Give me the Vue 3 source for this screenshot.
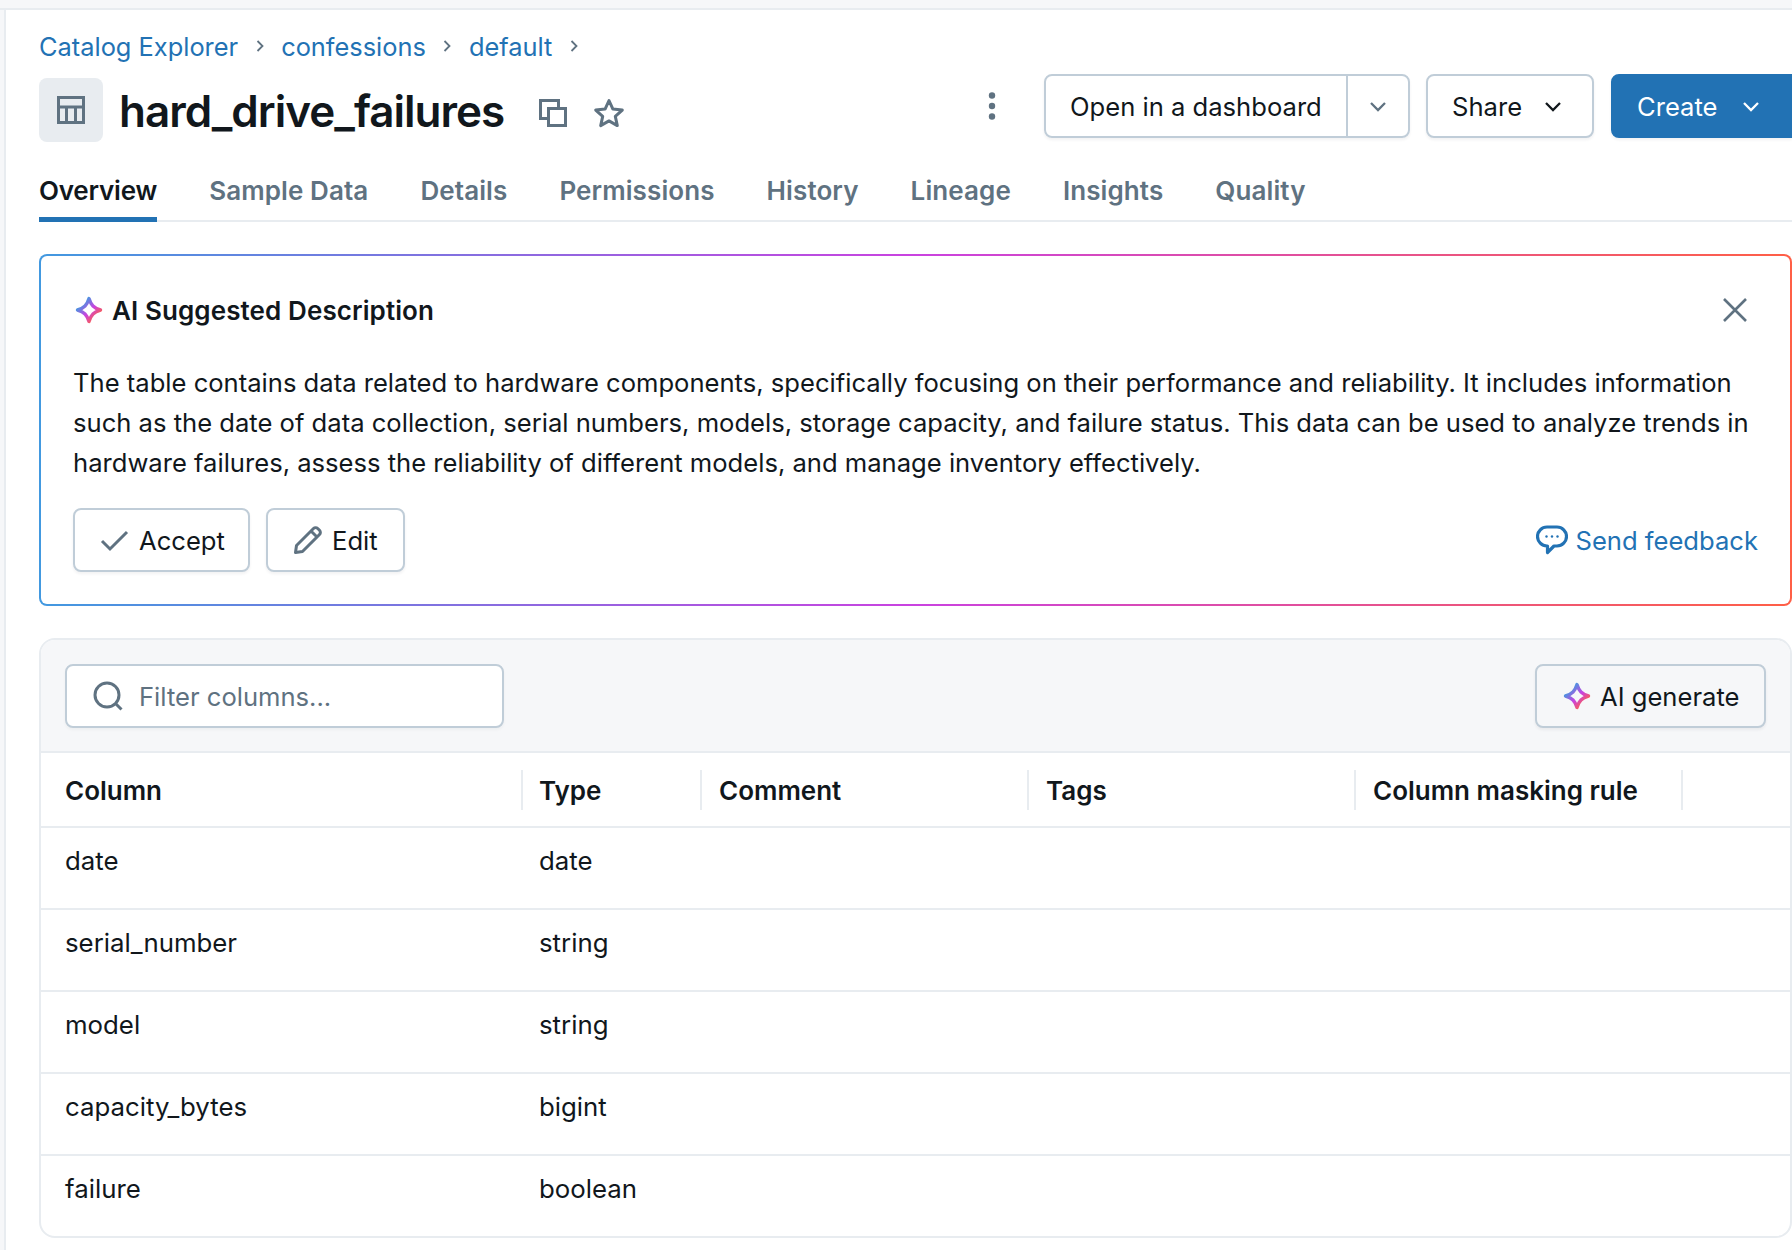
<script setup>
const tabs = ['Overview', 'Sample Data', 'Details', 'Permissions', 'History', 'Lineage', 'Insights', 'Quality']
const headers = ['Column', 'Type', 'Comment', 'Tags', 'Column masking rule', '']
const rows = [
  ['date', 'date'],
  ['serial_number', 'string'],
  ['model', 'string'],
  ['capacity_bytes', 'bigint'],
  ['failure', 'boolean'],
]
</script>

<template>
  <div class="topbar"></div>
  <div class="shell">
    <div class="gutter"></div>
    <main class="main">
      <nav class="crumbs">
        <a>Catalog Explorer</a>
        <svg class="sep" viewBox="0 0 12 14"><path d="M3.500 2l5 5-5 5" /></svg>
        <a>confessions</a>
        <svg class="sep" viewBox="0 0 12 14"><path d="M3.500 2l5 5-5 5" /></svg>
        <a>default</a>
        <svg class="sep" viewBox="0 0 12 14"><path d="M3.500 2l5 5-5 5" /></svg>
      </nav>

      <header class="head">
        <div class="title-group">
          <div class="tile">
            <svg class="i-table" viewBox="0 0 28 28"><path d="M1.500 1.500h25v25h-25zM1.500 11h25M9.500 11v15.500M18.500 11v15.500" /></svg>
          </div>
          <h1>hard_drive_failures</h1>
          <svg class="i-copy" viewBox="0 0 28 28"><path d="M19.500 8V1.500H1.500v18H8M9.500 9.500h17v17h-17z" /></svg>
          <svg class="i-star" viewBox="0 0 32 30"><path d="M16 2.500l3.900 8.600 9.400 1-7 6.300 2 9.200-8.300-4.700-8.300 4.700 2-9.200-7-6.300 9.400-1z" /></svg>
        </div>
        <div class="spacer"></div>
        <svg class="i-kebab" viewBox="0 0 8 28"><circle cx="4" cy="3.500" r="3.200" /><circle cx="4" cy="14" r="3.200" /><circle cx="4" cy="24.500" r="3.200" /></svg>
        <div class="split">
          <span class="split-main">Open in a dashboard</span>
          <span class="split-caret"><svg class="chev muted" viewBox="0 0 20 20"><path d="M3 7l7 7 7-7" /></svg></span>
        </div>
        <button class="btn share">Share <svg class="chev dark" viewBox="0 0 20 20"><path d="M3 7l7 7 7-7" /></svg></button>
        <button class="btn create">Create <svg class="chev light" viewBox="0 0 20 20"><path d="M3 7l7 7 7-7" /></svg></button>
      </header>

      <div class="tabs">
        <span v-for="(t, i) in tabs" :key="t" class="tab" :class="{ on: i === 0 }">{{ t }}</span>
      </div>

      <section class="card">
        <div class="card-head">
          <svg class="spark" viewBox="0 0 28 28">
            <defs>
              <linearGradient id="spA" x1="0" y1=".2" x2=".8" y2="1">
                <stop offset=".1" stop-color="#4299e0" /><stop offset=".55" stop-color="#ca42e0" /><stop offset=".95" stop-color="#ff5f46" />
              </linearGradient>
            </defs>
            <path stroke="url(#spA)" d="M14 2.500c2 6.500 4.800 9.500 11.500 11.500-6.700 2-9.500 5-11.500 11.500-2-6.500-4.800-9.500-11.500-11.500 6.700-2 9.500-5 11.500-11.500z" />
          </svg>
          <strong>AI Suggested Description</strong>
          <svg class="i-close" viewBox="0 0 26 26"><path d="M2 2l22 22M24 2L2 24" /></svg>
        </div>
        <p>The table contains data related to hardware components, specifically focusing on their performance and reliability. It includes information such as the date of data collection, serial numbers, models, storage capacity, and failure status. This data can be used to analyze trends in hardware failures, assess the reliability of different models, and manage inventory effectively.</p>
        <div class="card-actions">
          <button class="btn accept">
            <svg class="i-check" viewBox="0 0 30 24"><path d="M3 13l8 8L28 4" /></svg>Accept
          </button>
          <button class="btn edit">
            <svg class="i-pencil" viewBox="0 0 30 30"><path d="M2.500 27.500l1-7L20.500 3.500a3 3 0 0 1 4.200 0l1.800 1.800a3 3 0 0 1 0 4.200L9.500 26.500zM18 6l6 6" /></svg>Edit
          </button>
          <a class="feedback">
            <svg class="i-chat" viewBox="0 0 32 30"><path d="M11 2h10a9.500 9.500 0 0 1 0 19h-3l-6.500 6.500V21H11a9.500 9.500 0 0 1 0-19z" /><circle class="dot" cx="10.500" cy="11.500" r="1.200" /><circle class="dot" cx="16" cy="11.500" r="1.200" /><circle class="dot" cx="21.500" cy="11.500" r="1.200" /></svg>
            Send feedback
          </a>
        </div>
      </section>

      <section class="panel">
        <div class="toolbar">
          <div class="filter">
            <svg class="i-search" viewBox="0 0 30 30"><circle cx="14" cy="14" r="12" /><path d="M22.500 22.500l6 6" /></svg>
            <span>Filter columns...</span>
          </div>
          <button class="btn ai">
            <svg class="spark" viewBox="0 0 28 28">
              <defs>
                <linearGradient id="spB" x1="0" y1=".2" x2=".8" y2="1">
                  <stop offset=".1" stop-color="#4299e0" /><stop offset=".55" stop-color="#ca42e0" /><stop offset=".95" stop-color="#ff5f46" />
                </linearGradient>
              </defs>
              <path stroke="url(#spB)" d="M14 2.500c2 6.500 4.800 9.500 11.500 11.500-6.700 2-9.500 5-11.500 11.500-2-6.500-4.800-9.500-11.500-11.500 6.700-2 9.500-5 11.500-11.500z" />
            </svg>
            <span class="ai-label">AI generate</span>
          </button>
        </div>
        <div class="row hrow">
          <div v-for="(h, i) in headers" :key="i" class="cell hcell">{{ h }}</div>
        </div>
        <div v-for="r in rows" :key="r[0]" class="row drow">
          <div class="cell">{{ r[0] }}</div>
          <div class="cell">{{ r[1] }}</div>
        </div>
      </section>
    </main>
  </div>
</template>

<style>
html, body { margin: 0; background: #fff; }
</style>

<style scoped>
* { box-sizing: border-box; }
.topbar { height: 10px; background: #f6f7f9; border-bottom: 2px solid #e8ecf0; }
.shell { display: flex; width: 1792px; height: 1240px; overflow: hidden; font-family: Inter, "Liberation Sans", sans-serif; color: #11171c; font-size: 25.6px; }
.gutter { width: 6px; flex: none; background: #f6f7f9; border-right: 2px solid #e8ecf0; }
.main { width: 1786px; flex: none; padding-left: 33px; }

.crumbs { display: flex; align-items: center; height: 40px; margin-top: 16px; color: #2272b4; font-size: 25.4px; }
.sep { width: 12px; height: 14px; margin: 0 15.5px; fill: none; stroke: #5f7281; stroke-width: 1.8; }

.head { display: flex; align-items: flex-start; height: 68px; margin-top: 8px; }
.title-group { display: flex; align-items: center; height: 64px; margin-top: 4px; }
.tile { width: 64px; height: 64px; border-radius: 8px; background: #e8ecf0; display: flex; align-items: center; justify-content: center; flex: none; }
.i-table { width: 28px; height: 28px; fill: none; stroke: #5f7281; stroke-width: 3; }
h1 { margin: 0 0 0 16px; font-size: 44px; font-weight: 600; line-height: 66px; height: 64px; letter-spacing: -1px; }
.i-copy { width: 28px; height: 28px; margin-left: 35px; margin-top: 6px; fill: none; stroke: #5f7281; stroke-width: 3; }
.i-star { width: 32px; height: 30px; margin-left: 26px; margin-top: 6px; fill: none; stroke: #5f7281; stroke-width: 3; stroke-linejoin: round; }
.spacer { flex: 1; }
.i-kebab { width: 8px; height: 28px; fill: #5f7281; margin-right: 48px; margin-top: 18px; }

.btn { display: inline-flex; align-items: center; height: 64px; border: 2px solid #c0cdd8; border-radius: 8px; background: #fff; color: #11171c; font: inherit; padding: 0; box-shadow: 0 2px 3px rgba(31, 39, 45, .06); }
.split { display: flex; height: 64px; width: 366px; border: 2px solid #c0cdd8; border-radius: 8px; box-shadow: 0 2px 3px rgba(31, 39, 45, .06); }
.split-main { width: 302px; padding-left: 24px; line-height: 62px; border-right: 2px solid #c0cdd8; }
.split-caret { flex: 1; display: flex; align-items: center; justify-content: center; }
.chev { width: 20px; height: 20px; fill: none; stroke-width: 2.300; }
.chev.muted { stroke: #5f7281; }
.chev.dark { stroke: #11171c; margin-left: 21px; }
.chev.light { stroke: #fff; margin-left: 23px; }
.share { width: 168px; margin-left: 16px; padding-left: 24px; }
.create { width: 181px; margin-left: 17px; padding-left: 24px; background: #2272b4; border-color: #2272b4; color: #fff; border-radius: 8px 0 0 8px; }

.tabs { display: flex; gap: 52px; height: 80px; padding-top: 29px; border-bottom: 2px solid #e8ecf0; font-size: 26px; }
.tab { font-weight: 600; color: #5f7281; line-height: 40px; height: 51px; letter-spacing: .1px; }
.tab.on { color: #11171c; border-bottom: 5px solid #2272b4; letter-spacing: -.2px; }

.card { margin-top: 32px; height: 352px; padding: 0 32px; border: 2px solid transparent; border-radius: 8px; background: linear-gradient(#fff, #fff) padding-box, linear-gradient(90deg, #4299e0, #ca42e0 50%, #ff5f46) border-box; }
.card-head { display: flex; align-items: center; height: 40px; margin-top: 34px; }
.card-head strong { font-weight: 600; font-size: 26px; margin-left: 9px; letter-spacing: .1px; }
.card-head .spark { margin-left: 2px; }
.spark { width: 28px; height: 28px; fill: none; stroke-width: 3.400; stroke-linejoin: round; flex: none; }
.i-close { width: 26px; height: 26px; margin-left: auto; margin-right: 10px; fill: none; stroke: #5f7281; stroke-width: 2.600; }
.card p { margin: 33px 0 0; line-height: 40px; }
.card-actions { display: flex; align-items: center; margin-top: 25px; }
.accept { width: 177px; padding-left: 24px; }
.edit { width: 139px; margin-left: 16px; padding-left: 25px; }
.i-check { width: 30px; height: 24px; margin-right: 10px; fill: none; stroke: #5f7281; stroke-width: 3; }
.i-pencil { width: 30px; height: 30px; margin-right: 9px; fill: none; stroke: #5f7281; stroke-width: 3; stroke-linejoin: round; }
.feedback { margin-left: auto; display: flex; align-items: center; gap: 7px; color: #2272b4; }
.i-chat { width: 32px; height: 30px; fill: none; stroke: #2272b4; stroke-width: 3.200; stroke-linejoin: round; }
.dot { fill: #2272b4; stroke: none; }

.panel { margin-top: 32px; height: 600px; border: 2px solid #e8ecf0; border-radius: 16px; overflow: hidden; }
.toolbar { height: 113px; background: #f6f7f9; border-bottom: 2px solid #e8ecf0; display: flex; align-items: center; justify-content: space-between; padding: 0 24px; }
.filter { width: 439px; height: 64px; background: #fff; border: 2px solid #c0cdd8; border-radius: 8px; display: flex; align-items: center; padding-left: 26px; color: #5f7281; box-shadow: 0 2px 3px rgba(31, 39, 45, .04); }
.filter span { line-height: 1; padding-top: 2px; }
.i-search { width: 30px; height: 30px; margin-right: 16px; fill: none; stroke: #5f7281; stroke-width: 3; }
.ai { width: 231px; padding-left: 26px; background: #f6f7f9; }
.ai .spark { margin-right: 9px; }
.ai-label { line-height: 1; padding-top: 2px; }

.row { display: grid; grid-template-columns: 480px 179px 327px 327px 327px 1fr; font-size: 25.800px; }
.cell { padding-left: 19px; }
.cell:first-child { padding-left: 24px; }
.cell:nth-child(2) { padding-left: 18px; }
.hrow { height: 75px; align-items: center; border-bottom: 2px solid #e8ecf0; font-size: 26px; }
.hcell { font-weight: 600; position: relative; height: 40px; line-height: 42px; }
.hcell:not(:first-child)::before { content: ""; position: absolute; left: 0; top: 0; bottom: 0; width: 2px; background: #e8ecf0; }
.drow { height: 82px; padding-top: 13px; line-height: 40px; border-bottom: 2px solid #e8ecf0; }
.drow:last-child { border-bottom: 0; }
</style>
